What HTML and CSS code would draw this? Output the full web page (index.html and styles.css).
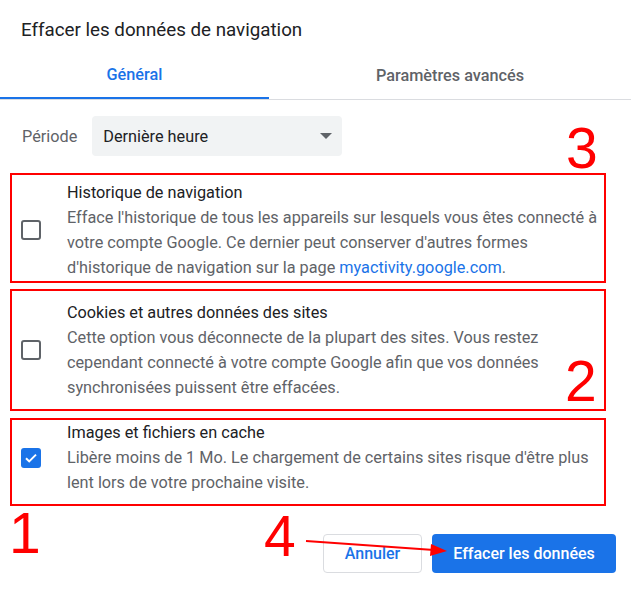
FILE: index.html
```html
<!DOCTYPE html>
<html lang="fr">
<head>
  <meta charset="UTF-8">
  <title>Effacer les données de navigation</title>
  <link rel="stylesheet" href="styles.css">
</head>
<body>
  <div class="dialog">
    <div class="dialog-title">Effacer les données de navigation</div>

    <div class="tabs">
      <div class="tab active">Général</div>
      <div class="tab">Paramètres avancés</div>
    </div>

    <div class="period">
      <span class="period-label">Période</span>
      <div class="select">
        <span>Dernière heure</span>
        <span class="select-arrow"></span>
      </div>
    </div>

    <div class="options">
      <div class="option option-history">
        <span class="checkbox"></span>
        <div class="option-text">
          <div class="option-title">Historique de navigation</div>
          <div class="option-desc">Efface l'historique de tous les appareils sur lesquels vous êtes connecté à votre compte Google. Ce dernier peut conserver d'autres formes d'historique de navigation sur la page <a class="link" href="#">myactivity.google.com</a>.</div>
        </div>
      </div>

      <div class="option option-cookies">
        <span class="checkbox"></span>
        <div class="option-text">
          <div class="option-title">Cookies et autres données des sites</div>
          <div class="option-desc">Cette option vous déconnecte de la plupart des sites. Vous restez cependant connecté à votre compte Google afin que vos données synchronisées puissent être effacées.</div>
        </div>
      </div>

      <div class="option option-cache">
        <span class="checkbox checked">
          <svg viewBox="0 0 20 20" width="20" height="20"><path d="M5 10.2l3.2 3.2L15 6.6" fill="none" stroke="#fff" stroke-width="2"/></svg>
        </span>
        <div class="option-text">
          <div class="option-title">Images et fichiers en cache</div>
          <div class="option-desc">Libère moins de 1 Mo. Le chargement de certains sites risque d'être plus lent lors de votre prochaine visite.</div>
        </div>
      </div>
    </div>

    <div class="actions">
      <button class="btn btn-cancel">Annuler</button>
      <button class="btn btn-primary">Effacer les données</button>
    </div>

    <span class="mark mark-3">3</span>
    <span class="mark mark-2">2</span>
    <span class="mark mark-1">1</span>
    <span class="mark mark-4">4</span>
    <svg class="arrow" width="631" height="590" viewBox="0 0 631 590">
      <line x1="306" y1="541" x2="434" y2="550" stroke="#ff0000" stroke-width="2"/>
      <polygon points="447,551 431,544 430,556" fill="#ff0000"/>
    </svg>
  </div>
</body>
</html>
```

FILE: styles.css
```css
* {
  box-sizing: border-box;
}

body {
  margin: 0;
  background: #fff;
  font-family: Roboto, "Noto Sans", sans-serif;
  color: #202124;
}

.dialog {
  position: relative;
  width: 631px;
  height: 590px;
  overflow: hidden;
}

.dialog-title {
  padding: 18px 0 0 21px;
  font-size: 18.75px;
  line-height: 24px;
}

.tabs {
  display: flex;
  margin-top: 9px;
  border-bottom: 1px solid #dadce0;
}

.tab {
  flex: 1;
  height: 48px;
  display: flex;
  align-items: center;
  justify-content: center;
  font-size: 16.25px;
  font-weight: 500;
  color: #5f6368;
}

.tab.active {
  flex: 0 0 269px;
  color: #1a73e8;
  border-bottom: 2px solid #1a73e8;
  margin-bottom: -1px;
  padding-top: 1px;
}

.period {
  display: flex;
  align-items: center;
  gap: 15px;
  margin-top: 16px;
  padding-left: 22px;
}

.period-label {
  font-size: 16.25px;
  color: #5f6368;
}

.select {
  width: 250px;
  height: 40px;
  display: flex;
  align-items: center;
  justify-content: space-between;
  padding: 0 10px 0 11px;
  background: #f1f3f4;
  border-radius: 4px;
  font-size: 16.25px;
  color: #202124;
}

.select-arrow {
  width: 0;
  height: 0;
  border-left: 6px solid transparent;
  border-right: 6px solid transparent;
  border-top: 6px solid #5f6368;
}

.options {
  margin: 17px 0 0 10px;
  width: 596px;
}

.option {
  display: flex;
  align-items: center;
  gap: 26px;
  border: 2px solid #ff0000;
  padding-left: 9px;
  padding-right: 4px;
}

.option-history {
  padding-top: 5px;
  padding-bottom: 1px;
}

.option-cookies {
  margin-top: 6px;
  padding-top: 9px;
  padding-bottom: 9px;
}

.option-cache {
  margin-top: 7px;
  padding-top: 0;
  padding-bottom: 9px;
}

.checkbox {
  flex: 0 0 20px;
  width: 20px;
  height: 20px;
  border: 2px solid #5f6368;
  border-radius: 3px;
}

.checkbox.checked {
  border: none;
  background: #1a73e8;
  display: flex;
}

.option-text {
  flex: 1;
  font-size: 16.25px;
  line-height: 25px;
}

.option-title {
  color: #202124;
}

.option-desc {
  color: #5f6368;
}

.link {
  color: #1a73e8;
  text-decoration: none;
}

.actions {
  display: flex;
  justify-content: flex-end;
  gap: 10px;
  margin-top: 28px;
  padding-right: 15px;
}

.btn {
  height: 39px;
  border-radius: 4px;
  font-family: Roboto, sans-serif;
  font-size: 16px;
  font-weight: 500;
  padding: 0;
}

.btn-cancel {
  width: 99px;
  background: #fff;
  color: #1a73e8;
  border: 1px solid #dadce0;
}

.btn-primary {
  width: 184px;
  background: #1a73e8;
  color: #fff;
  border: none;
}

.mark {
  position: absolute;
  font-family: "Liberation Sans", Arial, sans-serif;
  font-size: 57px;
  line-height: 57px;
  color: #ff0000;
}

.mark-3 {
  left: 566px;
  top: 120px;
}

.mark-2 {
  left: 565px;
  top: 353px;
}

.mark-1 {
  left: 9px;
  top: 505px;
}

.mark-4 {
  left: 264px;
  top: 508px;
}

.arrow {
  position: absolute;
  left: 0;
  top: 0;
  pointer-events: none;
}
```
